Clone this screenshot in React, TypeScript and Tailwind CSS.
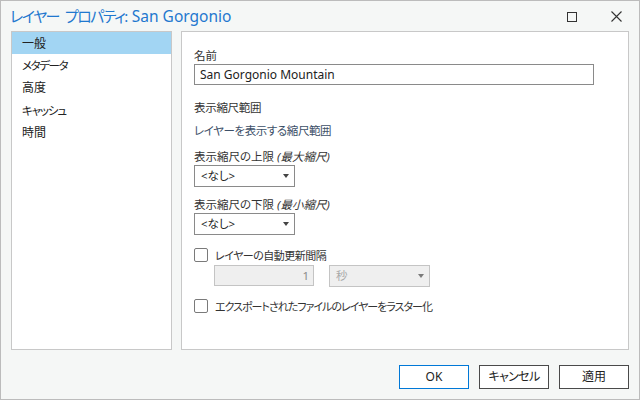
const jp = "font-['Noto_Sans','Noto_Sans_CJK_JP',sans-serif] [font-feature-settings:'palt']";

function Caret({ disabled }: { disabled?: boolean }) {
  return (
    <svg width="6" height="4" viewBox="0 0 6 4" className="shrink-0">
      <path d="M0 0h6L3 4z" fill={disabled ? "#7a7a7a" : "#444"} />
    </svg>
  );
}

function Select({ value, disabled, w }: { value: string; disabled?: boolean; w: string }) {
  return (
    <div
      className={`${w} h-[22px] flex items-center justify-between pl-[6px] pr-[5px] border ${
        disabled ? "border-[#c4c4c4] bg-[#efefef] text-[#a8a8a8]" : "border-[#8a8a8a] bg-white text-[#222]"
      }`}
    >
      <span className="text-[11.5px] leading-none">{value}</span>
      <Caret disabled={disabled} />
    </div>
  );
}

function Check({ label, className, track }: { label: string; className?: string; track: string }) {
  return (
    <div className={`flex items-center h-[16px] ${className ?? ""}`}>
      <div className="w-[14px] h-[14px] border border-[#7a7a7a] rounded-[2px] bg-white" />
      <span className={`ml-[7px] text-[11px] text-[#333] leading-none ${track}`}>{label}</span>
    </div>
  );
}

export default function App() {
  const nav = [
    { t: "一般", k: "" },
    { t: "メタデータ", k: "text-[11.5px] tracking-[-1.4px]" },
    { t: "高度", k: "" },
    { t: "キャッシュ", k: "text-[11.5px] tracking-[-1.1px]" },
    { t: "時間", k: "" },
  ];
  return (
    <div className={`w-[640px] h-[400px] border border-[#bcbcbc] bg-[#f5f7f6] flex flex-col ${jp}`}>
      {/* title bar */}
      <div className="h-[30px] flex items-center pl-[9px] pr-[17px] pt-[1px] shrink-0">
        <div className="flex items-baseline text-[15.5px] text-[#1f78cf] leading-none">
          <span className="text-[15px] tracking-[-1.5px]">レイヤー</span>
          <span className="text-[15px] tracking-[-1.5px] ml-[6px]">プロパティ:</span>
          <span className="ml-[5px]">San Gorgonio</span>
        </div>
        <div className="ml-auto flex items-center gap-[34px]">
          <div className="w-[10px] h-[10px] border border-[#333]" />
          <svg width="11" height="11" viewBox="0 0 11 11">
            <path d="M0.5 0.5l10 10M10.5 0.5l-10 10" stroke="#333" strokeWidth="1.1" />
          </svg>
        </div>
      </div>

      {/* body */}
      <div className="flex gap-[9px] px-[10px] h-[319px] shrink-0">
        <div className="w-[161px] border border-[#c8c8c8] bg-white flex flex-col">
          {nav.map((n, i) => (
            <div
              key={n.t}
              className={`flex items-center pl-[10px] pt-[1px] text-[12px] text-[#222] ${
                i === 0 ? "h-[22px] bg-[#a2d5f3]" : "h-[22.5px]"
              }`}
            >
              <span className={n.k}>{n.t}</span>
            </div>
          ))}
        </div>

        <div className="flex-1 border border-[#c8c8c8] bg-white flex flex-col pl-[12px] pt-[16px] text-[11.5px] text-[#333]">
          <div className="h-[16px] flex items-center">名前</div>
          <div className="w-[400px] h-[21px] border border-[#8a8a8a] flex items-center pl-[5px] text-[12px] text-[#222]">
            San Gorgonio Mountain
          </div>

          <div className="h-[16px] flex items-center mt-[15px] tracking-[-0.3px]">表示縮尺範囲</div>
          <div className="h-[16px] flex items-center mt-[7px] text-[#3d5068] tracking-[-0.4px]">
            レイヤーを表示する縮尺範囲
          </div>

          <div className="h-[16px] flex items-center mt-[10px]">
            表示縮尺の上限 <span className="italic ml-[3px]">(最大縮尺)</span>
          </div>
          <Select value="<なし>" w="w-[101px]" />
          <div className="h-[16px] flex items-center mt-[10px]">
            表示縮尺の下限 <span className="italic ml-[3px]">(最小縮尺)</span>
          </div>
          <Select value="<なし>" w="w-[101px]" />

          <Check label="レイヤーの自動更新間隔" className="mt-[12px]" track="tracking-[-0.5px]" />
          <div className="flex gap-[15px] mt-[2px] ml-[20px]">
            <div className="w-[100px] h-[21px] border border-[#c4c4c4] bg-[#efefef] flex items-center justify-end pr-[4px] text-[#8a8a8a]">
              1
            </div>
            <Select value="秒" disabled w="w-[101px]" />
          </div>

          <Check
            label="エクスポートされたファイルのレイヤーをラスター化"
            className="mt-[11px]"
            track="tracking-[-1px]"
          />
        </div>
      </div>

      {/* footer */}
      <div className="flex justify-end gap-[10px] pr-[10px] pt-[15px]">
        <button className="w-[70px] h-[24px] border border-[#0078d7] bg-white text-[12px] text-[#222]">OK</button>
        <button className="w-[70px] h-[24px] border border-[#4a4a4a] bg-white text-[12px] text-[#222] tracking-[-0.6px]">
          キャンセル
        </button>
        <button className="w-[70px] h-[24px] border border-[#4a4a4a] bg-white text-[12px] text-[#222]">適用</button>
      </div>
    </div>
  );
}
